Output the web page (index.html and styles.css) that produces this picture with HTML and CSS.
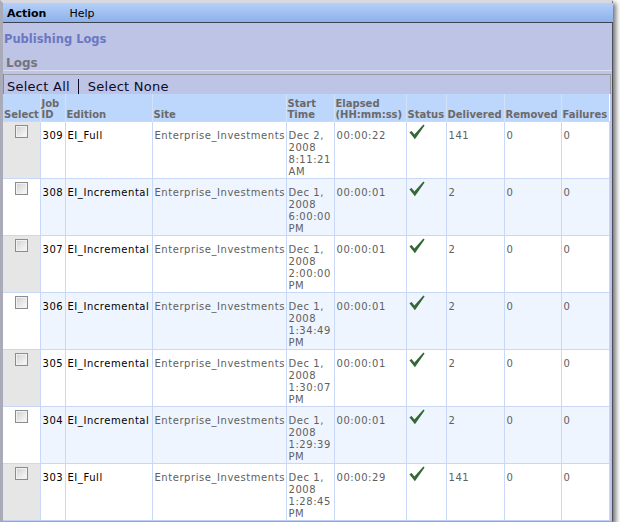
FILE: index.html
```html
<!DOCTYPE html>
<html>
<head>
<meta charset="utf-8">
<link rel="stylesheet" href="styles.css">
</head>
<body>
<div class="window">
  <div class="menubar">
    <span class="menu menu-action">Action</span>
    <span class="menu">Help</span>
  </div>
  <div class="content">
    <div class="page-title">Publishing Logs</div>
    <div class="section-title">Logs</div>
    <div class="toolbar">
      <span class="tool">Select All</span>
      <span class="sep"></span>
      <span class="tool">Select None</span>
    </div>
    <table class="logs">
      <colgroup>
        <col class="c-select"><col class="c-id"><col class="c-edition"><col class="c-site"><col class="c-start"><col class="c-elapsed"><col class="c-status"><col class="c-delivered"><col class="c-removed"><col class="c-failures">
      </colgroup>
      <thead>
        <tr>
          <th>Select</th><th>Job ID</th><th>Edition</th><th>Site</th><th>Start Time</th><th>Elapsed (HH:mm:ss)</th><th>Status</th><th>Delivered</th><th>Removed</th><th>Failures</th>
        </tr>
      </thead>
      <tbody>
        <tr class="odd">
          <td class="sel"><span class="cb"></span></td><td class="dark">309</td><td class="dark">EI_Full</td><td>Enterprise_Investments</td><td>Dec 2, 2008 8:11:21 AM</td><td>00:00:22</td><td class="status"><svg class="tick" viewBox="0 0 16 16"><path d="M0.4 8.2 L2.6 7.0 L5.4 10.6 L14.4 0.6 L15.6 1.4 L5.9 15.2 Z"/></svg></td><td>141</td><td>0</td><td>0</td>
        </tr>
        <tr class="even">
          <td class="sel"><span class="cb"></span></td><td class="dark">308</td><td class="dark">EI_Incremental</td><td>Enterprise_Investments</td><td>Dec 1, 2008 6:00:00 PM</td><td>00:00:01</td><td class="status"><svg class="tick" viewBox="0 0 16 16"><path d="M0.4 8.2 L2.6 7.0 L5.4 10.6 L14.4 0.6 L15.6 1.4 L5.9 15.2 Z"/></svg></td><td>2</td><td>0</td><td>0</td>
        </tr>
        <tr class="odd">
          <td class="sel"><span class="cb"></span></td><td class="dark">307</td><td class="dark">EI_Incremental</td><td>Enterprise_Investments</td><td>Dec 1, 2008 2:00:00 PM</td><td>00:00:01</td><td class="status"><svg class="tick" viewBox="0 0 16 16"><path d="M0.4 8.2 L2.6 7.0 L5.4 10.6 L14.4 0.6 L15.6 1.4 L5.9 15.2 Z"/></svg></td><td>2</td><td>0</td><td>0</td>
        </tr>
        <tr class="even">
          <td class="sel"><span class="cb"></span></td><td class="dark">306</td><td class="dark">EI_Incremental</td><td>Enterprise_Investments</td><td>Dec 1, 2008 1:34:49 PM</td><td>00:00:01</td><td class="status"><svg class="tick" viewBox="0 0 16 16"><path d="M0.4 8.2 L2.6 7.0 L5.4 10.6 L14.4 0.6 L15.6 1.4 L5.9 15.2 Z"/></svg></td><td>2</td><td>0</td><td>0</td>
        </tr>
        <tr class="odd">
          <td class="sel"><span class="cb"></span></td><td class="dark">305</td><td class="dark">EI_Incremental</td><td>Enterprise_Investments</td><td>Dec 1, 2008 1:30:07 PM</td><td>00:00:01</td><td class="status"><svg class="tick" viewBox="0 0 16 16"><path d="M0.4 8.2 L2.6 7.0 L5.4 10.6 L14.4 0.6 L15.6 1.4 L5.9 15.2 Z"/></svg></td><td>2</td><td>0</td><td>0</td>
        </tr>
        <tr class="even">
          <td class="sel"><span class="cb"></span></td><td class="dark">304</td><td class="dark">EI_Incremental</td><td>Enterprise_Investments</td><td>Dec 1, 2008 1:29:39 PM</td><td>00:00:01</td><td class="status"><svg class="tick" viewBox="0 0 16 16"><path d="M0.4 8.2 L2.6 7.0 L5.4 10.6 L14.4 0.6 L15.6 1.4 L5.9 15.2 Z"/></svg></td><td>2</td><td>0</td><td>0</td>
        </tr>
        <tr class="odd">
          <td class="sel"><span class="cb"></span></td><td class="dark">303</td><td class="dark">EI_Full</td><td>Enterprise_Investments</td><td>Dec 1, 2008 1:28:45 PM</td><td>00:00:29</td><td class="status"><svg class="tick" viewBox="0 0 16 16"><path d="M0.4 8.2 L2.6 7.0 L5.4 10.6 L14.4 0.6 L15.6 1.4 L5.9 15.2 Z"/></svg></td><td>141</td><td>0</td><td>0</td>
        </tr>
      </tbody>
    </table>
  </div>
</div>
</body>
</html>
```

FILE: styles.css
```css
html, body {
  margin: 0;
  padding: 0;
  background: #ffffff;
}
body {
  font-family: "DejaVu Sans", Verdana, sans-serif;
  font-size: 10px;
}
.window {
  width: 609px;
  border-left: 3px solid #a9abb8;
  border-top: 3px solid #d8d9e0;
  border-right: 1px solid #4a4d5a;
  border-bottom: 1px solid #9aa3c8;
  background: #bec4e6;
  box-shadow: 3px 3px 5px rgba(0, 0, 0, 0.55);
}
.menubar {
  display: flex;
  align-items: center;
  background: linear-gradient(#b4d0f8, #8db1ea);
  border-bottom: 1px solid #3d4350;
  margin-right: -1px;
  padding-left: 4px;
  padding-top: 1px;
  box-sizing: border-box;
  height: 20px;
}
.menu {
  font-size: 11px;
  color: #000;
  margin-right: 23px;
}
.menu-action {
  font-weight: bold;
  font-size: 11px;
}
.content {
  display: flex;
  flex-direction: column;
}
.page-title {
  height: 17px;
  padding-top: 9px;
  padding-left: 1px;
  font-size: 11.5px;
  line-height: 14px;
  font-weight: bold;
  color: #6a78c0;
}
.section-title {
  height: 14px;
  line-height: 14px;
  padding-top: 7px;
  padding-left: 3px;
  font-size: 12px;
  font-weight: bold;
  color: #74747a;
  border-bottom: 1px solid #dcdff2;
}
.toolbar {
  margin-top: 3px;
  box-sizing: border-box;
  display: flex;
  align-items: center;
  border: 1px solid #9a9aa0;
  border-bottom: none;
  border-left-color: #8a8a90;
  padding-left: 3px;
  padding-top: 4px;
  margin-right: 1px;
  height: 20px;
  font-size: 13px;
  letter-spacing: 0.25px;
  color: #0a0a2a;
}
.sep {
  display: inline-block;
  width: 1px;
  height: 16px;
  background: #0a0a2a;
  margin: 0 9px 0 8px;
}
table.logs {
  border-collapse: collapse;
  table-layout: fixed;
  width: 606px;
  background: #ffffff;
}
col.c-select { width: 37px; }
col.c-id { width: 25px; }
col.c-edition { width: 87px; }
col.c-site { width: 134px; }
col.c-start { width: 48px; }
col.c-elapsed { width: 72px; }
col.c-status { width: 40px; }
col.c-delivered { width: 58px; }
col.c-removed { width: 57px; }
col.c-failures { width: 48px; }
th {
  background: #bdd6fb;
  color: #6a6a6a;
  font-weight: bold;
  font-size: 10px;
  line-height: 11px;
  text-align: left;
  vertical-align: bottom;
  padding: 0 1px 1px 1px;
  height: 26px;
  border-left: 1px solid #d2e2fb;
  white-space: normal;
}
th:first-child {
  border-left: none;
}
td {
  vertical-align: top;
  color: #606060;
  line-height: 12px;
  letter-spacing: 0.55px;
  padding: 8px 2px 0 2px;
  height: 48px;
  border: 1px solid #c8d8f6;
  word-wrap: normal;
  white-space: normal;
  overflow: hidden;
}
td.dark {
  color: #000;
}
tr.even td {
  background: #eef5fe;
}
tr.odd td.sel {
  background: #e6e6e6;
}
tr.even td.sel {
  background: #ffffff;
}
td.sel {
  padding: 3px 0 0 12px;
  border-left: none;
}
tr:last-child td {
  border-bottom: 1px solid #bcd0f4;
}
.cb {
  display: block;
  width: 11px;
  height: 11px;
  border: 1px solid #8c8c8c;
  background: linear-gradient(135deg, #cfcfcf, #f4f4f4 80%);
  box-shadow: inset 0 0 0 1px #f2f2f2;
}
td.status {
  padding-top: 2px;
}
.tick {
  display: block;
  width: 16px;
  height: 16px;
  fill: #356635;
}
```
